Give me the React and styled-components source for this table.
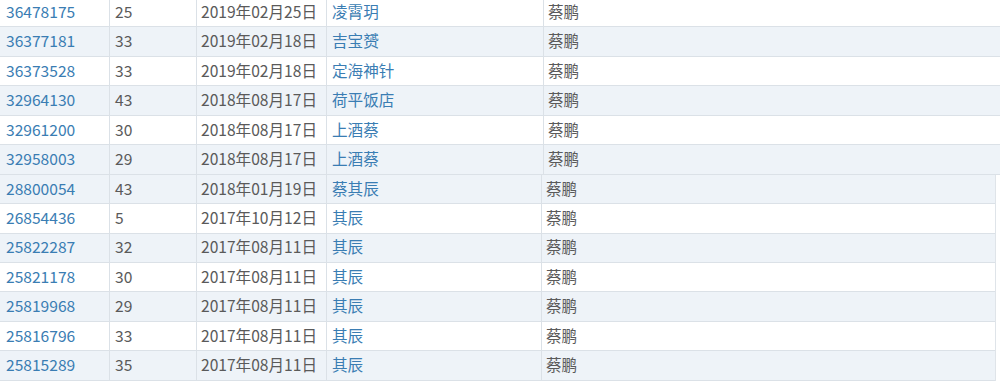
import React from "react";
import styled, { createGlobalStyle } from "styled-components";

const Global = createGlobalStyle`
  html, body { margin: 0; padding: 0; background: #fff; overflow: hidden; }
  body { font-family: "Noto Sans CJK SC", "Microsoft YaHei", sans-serif; }
`;

const Page = styled.div`
  display: flex;
  flex-direction: column;
  margin-top: -2px;
  width: 1000px;
`;

const Table = styled.div`
  display: grid;
  grid-template-columns: ${(p) => p.$cols};
  width: ${(p) => p.$width}px;
  border-right: ${(p) => (p.$edge ? "1px solid #dfe4e9" : "none")};
  box-sizing: border-box;
`;

const Row = styled.div`
  display: contents;
`;

const Cell = styled.div`
  height: 29.45px;
  box-sizing: border-box;
  display: flex;
  align-items: center;
  padding-left: ${(p) => p.$pad || 6}px;
  padding-bottom: 1px;
  background: ${(p) => (p.$alt ? "#eef3f8" : "#ffffff")};
  border-bottom: 1px solid #dbe1e7;
  border-left: ${(p) => (p.$first ? "none" : "1px solid #dbe1e7")};
  font-size: 15.6px;
  line-height: 1;
  color: ${(p) => (p.$link ? "#3a7db3" : "#5a5a5a")};
  white-space: nowrap;
  overflow: hidden;
`;

const top = [
  ["36478175", "25", "2019年02月25日", "凌霄玥", "蔡鹏"],
  ["36377181", "33", "2019年02月18日", "吉宝赟", "蔡鹏"],
  ["36373528", "33", "2019年02月18日", "定海神针", "蔡鹏"],
  ["32964130", "43", "2018年08月17日", "荷平饭店", "蔡鹏"],
  ["32961200", "30", "2018年08月17日", "上酒蔡", "蔡鹏"],
  ["32958003", "29", "2018年08月17日", "上酒蔡", "蔡鹏"],
];

const bottom = [
  ["28800054", "43", "2018年01月19日", "蔡其辰", "蔡鹏"],
  ["26854436", "5", "2017年10月12日", "其辰", "蔡鹏"],
  ["25822287", "32", "2017年08月11日", "其辰", "蔡鹏"],
  ["25821178", "30", "2017年08月11日", "其辰", "蔡鹏"],
  ["25819968", "29", "2017年08月11日", "其辰", "蔡鹏"],
  ["25816796", "33", "2017年08月11日", "其辰", "蔡鹏"],
  ["25815289", "35", "2017年08月11日", "其辰", "蔡鹏"],
];

function Rows({ data, altEven }) {
  return data.map((r, i) => {
    const alt = altEven ? i % 2 === 0 : i % 2 === 1;
    return (
      <Row key={r[0]}>
        <Cell $first $alt={alt} $link $pad={6}>{r[0]}</Cell>
        <Cell $alt={alt} $pad={5}>{r[1]}</Cell>
        <Cell $alt={alt} $pad={4}>{r[2]}</Cell>
        <Cell $alt={alt} $link $pad={5}>{r[3]}</Cell>
        <Cell $alt={alt} $pad={4}>{r[4]}</Cell>
      </Row>
    );
  });
}

export default function App() {
  return (
    <>
      <Global />
      <Page>
        <Table $width={1000} $cols="109px 87px 130px 217px 1fr">
          <Rows data={top} altEven={false} />
        </Table>
        <Table $width={996} $edge $cols="109px 87px 130px 215px 1fr">
          <Rows data={bottom} altEven={true} />
        </Table>
      </Page>
    </>
  );
}
